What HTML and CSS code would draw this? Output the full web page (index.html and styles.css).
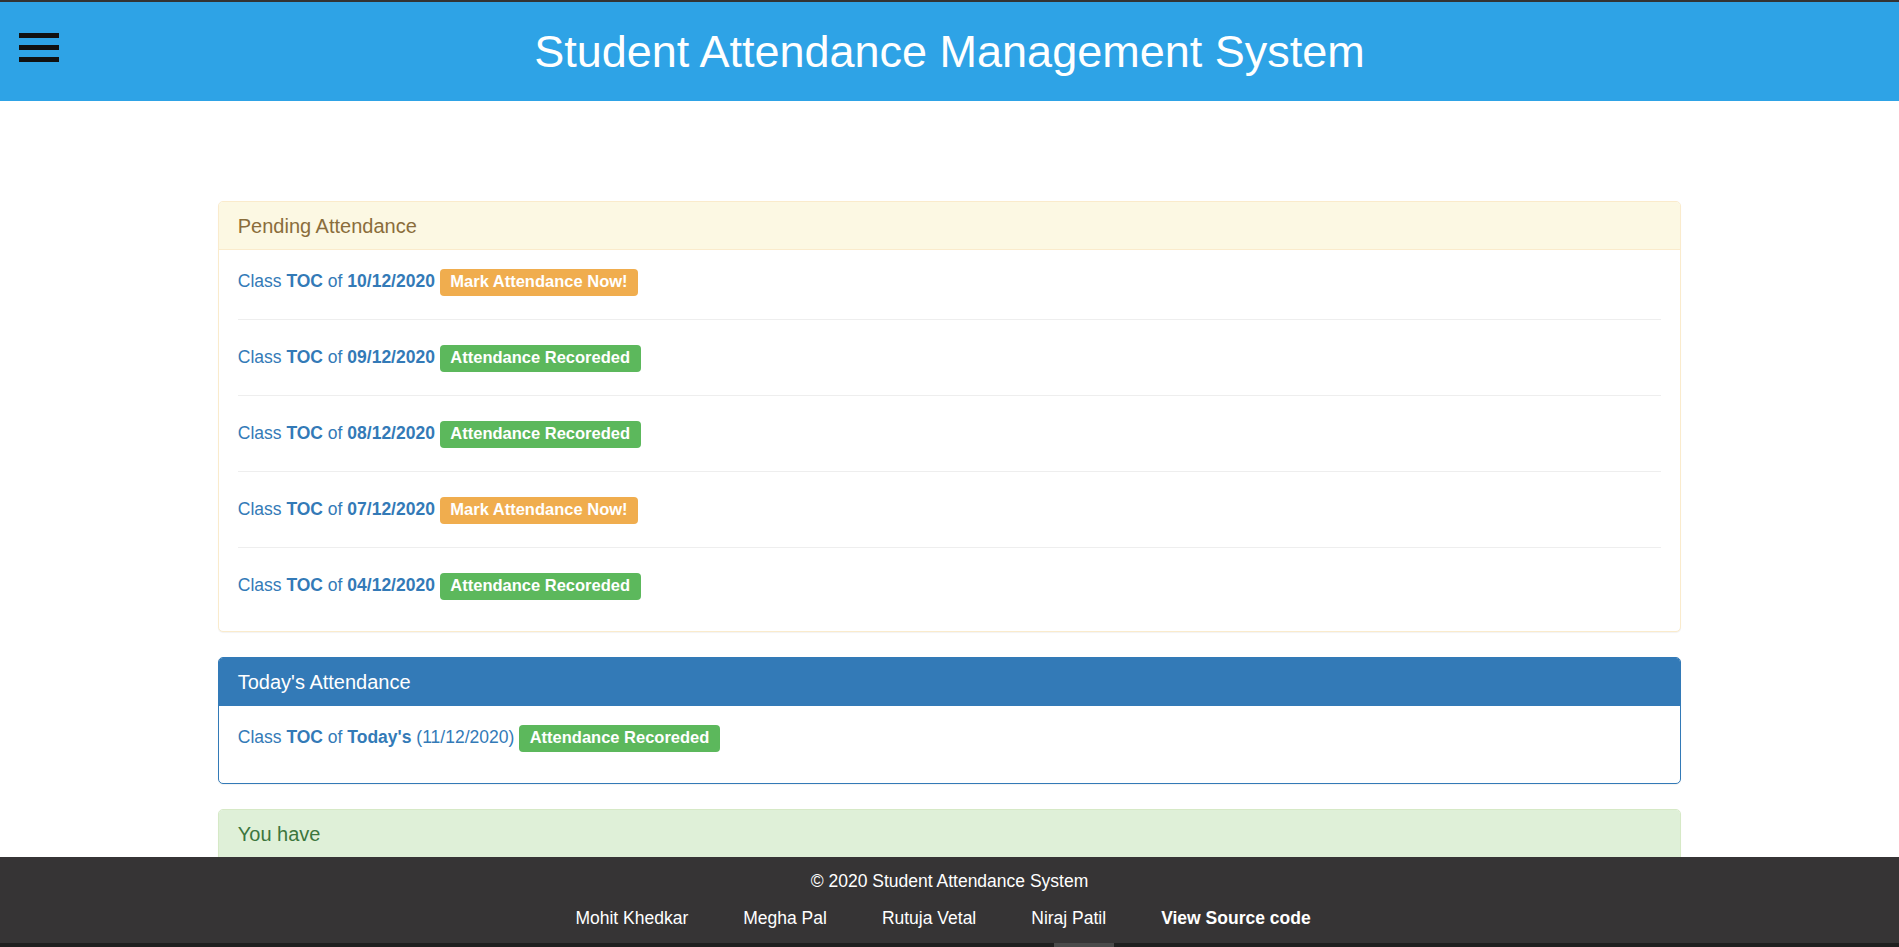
FILE: index.html
```html
<!DOCTYPE html>
<html lang="en">
<head>
<meta charset="utf-8">
<title>Student Attendance Management System</title>
<link rel="stylesheet" href="styles.css">
</head>
<body>
<header class="topbar">
  <div class="menu-btn" aria-label="menu">
    <span class="bar"></span>
    <span class="bar"></span>
    <span class="bar"></span>
  </div>
  <h1 class="site-title">Student Attendance Management System</h1>
  <div class="spacer"></div>
</header>

<main class="content">
  <div class="container">
    <section class="panel panel-warning">
      <div class="panel-heading"><h3 class="panel-title">Pending Attendance</h3></div>
      <div class="panel-body">
        <p class="item"><a class="item-link">Class <b>TOC</b> of <b>10/12/2020</b></a> <span class="label label-warning">Mark Attendance Now!</span></p>
        <hr class="sep">
        <p class="item"><a class="item-link">Class <b>TOC</b> of <b>09/12/2020</b></a> <span class="label label-success">Attendance Recoreded</span></p>
        <hr class="sep">
        <p class="item"><a class="item-link">Class <b>TOC</b> of <b>08/12/2020</b></a> <span class="label label-success">Attendance Recoreded</span></p>
        <hr class="sep">
        <p class="item"><a class="item-link">Class <b>TOC</b> of <b>07/12/2020</b></a> <span class="label label-warning">Mark Attendance Now!</span></p>
        <hr class="sep">
        <p class="item"><a class="item-link">Class <b>TOC</b> of <b>04/12/2020</b></a> <span class="label label-success">Attendance Recoreded</span></p>
      </div>
    </section>

    <section class="panel panel-primary">
      <div class="panel-heading"><h3 class="panel-title">Today's Attendance</h3></div>
      <div class="panel-body">
        <p class="item"><a class="item-link">Class <b>TOC</b> of <b>Today's</b> (11/12/2020)</a> <span class="label label-success">Attendance Recoreded</span></p>
      </div>
    </section>

    <section class="panel panel-success">
      <div class="panel-heading"><h3 class="panel-title">You have</h3></div>
      <div class="panel-body">
        <p class="item">attended all your classes.</p>
      </div>
    </section>
  </div>
</main>

<footer class="footer">
  <div class="copy">© 2020 Student Attendance System</div>
  <nav class="credits">
    <a class="credit">Mohit Khedkar</a>
    <a class="credit">Megha Pal</a>
    <a class="credit">Rutuja Vetal</a>
    <a class="credit">Niraj Patil</a>
    <a class="credit credit-strong">View Source code</a>
  </nav>
  <div class="footer-strip"><span class="strip-thumb"></span></div>
</footer>
</body>
</html>
```
FILE: styles.css
```css
html, body {
  margin: 0;
  padding: 0;
  overflow: hidden;
}

body {
  font-family: "Liberation Sans", Arial, Helvetica, sans-serif;
  font-size: 17.5px;
  line-height: 25px;
  color: #333;
  background: #fff;
}

/* ---------- header ---------- */
.topbar {
  border-top: 2px solid #333;
  background: #2ea3e6;
  height: 99px;
  display: grid;
  grid-template-columns: 1fr auto 1fr;
  align-items: center;
}

.menu-btn {
  align-self: start;
  margin-top: 31px;
  margin-left: 19px;
  width: 40px;
  display: flex;
  flex-direction: column;
  gap: 7px;
}

.bar {
  display: block;
  height: 5px;
  background: #111;
}

.site-title {
  margin: 0;
  font-size: 45px;
  line-height: 45px;
  font-weight: normal;
  color: #fff;
  white-space: nowrap;
}

/* ---------- content ---------- */
.content {
  padding-top: 100px;
}

.container {
  max-width: 1463px;
  margin: 0 auto;
}

.panel {
  border: 1px solid transparent;
  border-radius: 5px;
  margin-bottom: 25px;
  background: #fff;
  box-shadow: 0 1px 1px rgba(0, 0, 0, 0.05);
}

.panel-heading {
  padding: 12.5px 18.75px;
  border-bottom: 1px solid transparent;
  border-radius: 4px 4px 0 0;
}

.panel-title {
  margin: 0;
  font-size: 20px;
  line-height: 22px;
  font-weight: normal;
}

.panel-body {
  padding: 19px 18.75px 20.5px;
}

.item {
  margin: 0 0 12.5px;
  color: #337ab7;
}

.item-link {
  color: #337ab7;
  text-decoration: none;
}

.sep {
  margin: 25px 0;
  border: 0;
  border-top: 1px solid #eee;
  height: 0;
}

.label {
  display: inline-block;
  font-size: 16.5px;
  line-height: 17px;
  font-weight: bold;
  color: #fff;
  padding: 4px 10.5px 6px;
  margin: -1px 0 -3px;
  border-radius: 4px;
  white-space: nowrap;
}

.label-warning { background: #f0ad4e; }
.label-success { background: #5cb85c; }

.panel-warning { border-color: #faebcc; }
.panel-warning > .panel-heading {
  background: #fcf8e3;
  color: #8a6d3b;
  border-bottom-color: #faebcc;
}

.panel-primary { border-color: #337ab7; }
.panel-primary > .panel-heading {
  background: #337ab7;
  color: #fff;
  border-bottom-color: #337ab7;
}

.panel-success { border-color: #d6e9c6; }
.panel-success > .panel-heading {
  background: #dff0d8;
  color: #3c763d;
  border-bottom-color: #d6e9c6;
}

/* ---------- footer ---------- */
.footer {
  position: fixed;
  left: 0;
  right: 0;
  bottom: 0;
  height: 90px;
  background: #363435;
  color: #fff;
  text-align: center;
  padding-top: 12px;
  box-sizing: border-box;
  display: flex;
  flex-direction: column;
}

.copy {
  line-height: 25px;
}

.credits {
  margin-top: 12px;
  display: flex;
  justify-content: center;
  gap: 55px;
  padding-right: 13px;
  line-height: 25px;
}

.credit {
  color: #fff;
  text-decoration: none;
}

.credit-strong {
  font-weight: bold;
}

.footer-strip {
  margin-top: auto;
  height: 4px;
  background: #1f1f1f;
  display: flex;
}

.strip-thumb {
  margin-left: 1054px;
  width: 60px;
  background: #4a4a4a;
}
```
